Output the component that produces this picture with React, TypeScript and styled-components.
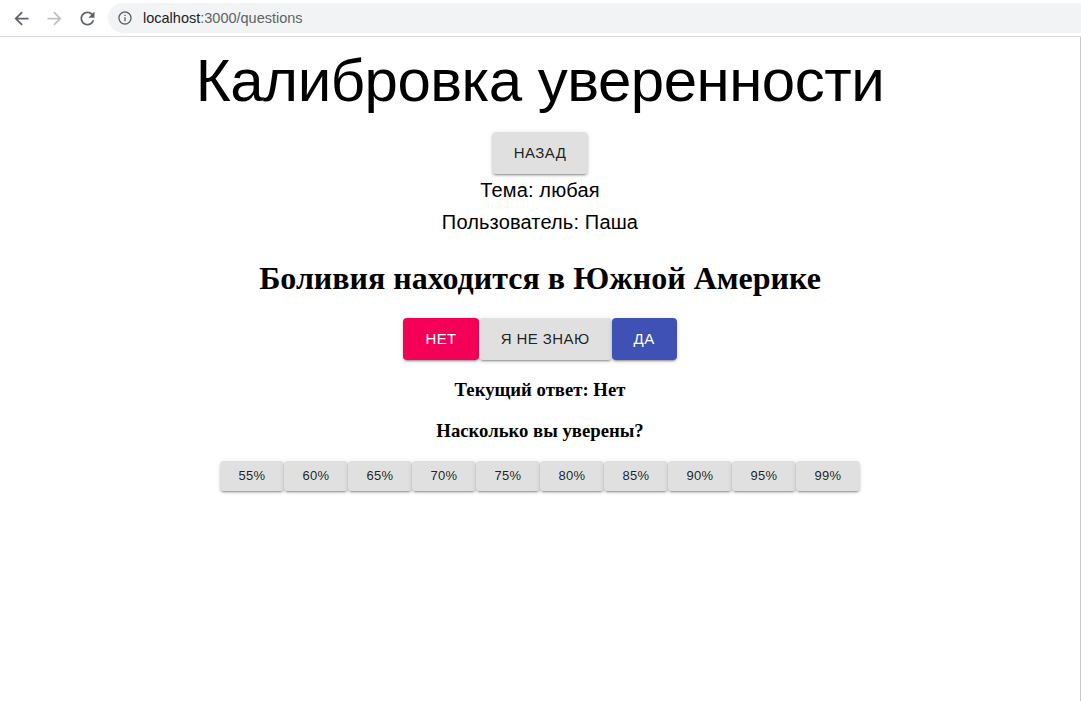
import React from "react";
import styled, { createGlobalStyle, css } from "styled-components";

const GlobalStyle = createGlobalStyle`
  html, body {
    margin: 0;
    padding: 0;
    background: #ffffff;
  }
  body {
    font-family: "Liberation Serif", "Times New Roman", serif;
    color: #000;
  }
`;

/* ---------- browser chrome ---------- */

const Chrome = styled.header`
  display: flex;
  align-items: center;
  height: 36px;
  padding-left: 7px;
  background: #ffffff;
  border-bottom: 1px solid #dadce0;
  box-sizing: content-box;
`;

const NavIcons = styled.div`
  display: flex;
  align-items: center;
  gap: 5px;
`;

const NavButton = styled.span<{ $disabled?: boolean }>`
  display: flex;
  align-items: center;
  justify-content: center;
  width: 28px;
  height: 28px;
  color: ${(p) => (p.$disabled ? "#bdc1c6" : "#5f6368")};
`;

const Omnibox = styled.div`
  flex: 1;
  display: flex;
  align-items: center;
  gap: 10px;
  height: 30px;
  margin-left: 7px;
  margin-top: -1px;
  padding-left: 9px;
  background: #f1f3f4;
  border-radius: 15px 0 0 15px;
  font-family: "Liberation Sans", Arial, sans-serif;
  font-size: 14.5px;
`;

const Host = styled.span`
  color: #202124;
`;

const PathPart = styled.span`
  color: #5f6368;
`;

const UrlText = styled.div`
  display: flex;
  white-space: nowrap;
`;

/* ---------- page ---------- */

const Page = styled.main`
  box-sizing: border-box;
  min-height: calc(100vh - 37px);
  padding: 8px;
  border-right: 1px solid #c8c8c8;
  text-align: center;
`;

const Title = styled.h2`
  margin: 0;
  font-family: "Liberation Sans", Arial, sans-serif;
  font-size: 60px;
  font-weight: 400;
  line-height: 1.2;
  letter-spacing: -0.00833em;
  color: #000;
`;

const Info = styled.h6`
  margin: 0;
  font-family: "Liberation Sans", Arial, sans-serif;
  font-size: 20px;
  font-weight: 400;
  line-height: 1.6;
  letter-spacing: 0.0075em;
  color: #000;
`;

const Question = styled.h1`
  margin: 0.67em 0;
  font-family: "Liberation Serif", "Times New Roman", serif;
  font-size: 32px;
  font-weight: 700;
`;

const SubHeading = styled.h3`
  margin: 1em 0;
  font-family: "Liberation Serif", "Times New Roman", serif;
  font-size: 18.72px;
  font-weight: 700;
`;

const ButtonRow = styled.div<{ $top?: number }>`
  display: flex;
  justify-content: center;
  margin-top: ${(p) => p.$top ?? 0}px;
`;

type Tone = "default" | "primary" | "secondary";

const tones: Record<Tone, ReturnType<typeof css>> = {
  default: css`
    background: #e0e0e0;
    color: rgba(0, 0, 0, 0.87);
  `,
  primary: css`
    background: #3f51b5;
    color: #ffffff;
  `,
  secondary: css`
    background: #f50057;
    color: #ffffff;
  `,
};

const Button = styled.button<{ $tone?: Tone; $small?: boolean }>`
  display: inline-flex;
  align-items: center;
  justify-content: center;
  box-sizing: border-box;
  min-width: 64px;
  margin: 0;
  border: 0;
  border-radius: 4px;
  font-family: "Liberation Sans", Arial, sans-serif;
  font-weight: 400;
  line-height: 1.75;
  letter-spacing: 0.02857em;
  text-transform: uppercase;
  cursor: pointer;
  padding: ${(p) => (p.$small ? "4px 10px" : "8px 22px")};
  font-size: ${(p) => (p.$small ? "13px" : "15px")};
  box-shadow: 0px 3px 1px -2px rgba(0, 0, 0, 0.2),
    0px 2px 2px 0px rgba(0, 0, 0, 0.14), 0px 1px 5px 0px rgba(0, 0, 0, 0.12);
  ${(p) => tones[p.$tone ?? "default"]}
`;

const BackIcon = () => (
  <svg width="21" height="21" viewBox="0 0 24 24" fill="currentColor">
    <path d="M20 11H7.83l5.59-5.59L12 4l-8 8 8 8 1.41-1.41L7.83 13H20v-2z" />
  </svg>
);

const ForwardIcon = () => (
  <svg width="21" height="21" viewBox="0 0 24 24" fill="currentColor">
    <path d="M12 4l-1.41 1.41L16.17 11H4v2h12.17l-5.58 5.59L12 20l8-8z" />
  </svg>
);

const ReloadIcon = () => (
  <svg width="21" height="21" viewBox="0 0 24 24" fill="currentColor">
    <path d="M17.65 6.35C16.2 4.9 14.21 4 12 4c-4.42 0-7.99 3.58-7.99 8s3.57 8 7.99 8c3.73 0 6.84-2.55 7.73-6h-2.08c-.82 2.33-3.04 4-5.65 4-3.31 0-6-2.69-6-6s2.69-6 6-6c1.66 0 3.14.69 4.22 1.78L13 11h7V4l-2.35 2.35z" />
  </svg>
);

const InfoIcon = () => (
  <svg width="16" height="16" viewBox="0 0 24 24" fill="#5f6368">
    <path d="M11 7h2v2h-2zm0 4h2v6h-2zm1-9C6.48 2 2 6.48 2 12s4.48 10 10 10 10-4.48 10-10S17.52 2 12 2zm0 18c-4.41 0-8-3.59-8-8s3.59-8 8-8 8 3.59 8 8-3.59 8-8 8z" />
  </svg>
);

const percents = ["55%", "60%", "65%", "70%", "75%", "80%", "85%", "90%", "95%", "99%"];

export default function App() {
  return (
    <>
      <GlobalStyle />
      <Chrome>
        <NavIcons>
          <NavButton>
            <BackIcon />
          </NavButton>
          <NavButton $disabled>
            <ForwardIcon />
          </NavButton>
          <NavButton>
            <ReloadIcon />
          </NavButton>
        </NavIcons>
        <Omnibox>
          <InfoIcon />
          <UrlText>
            <Host>localhost</Host>
            <PathPart>:3000/questions</PathPart>
          </UrlText>
        </Omnibox>
      </Chrome>
      <Page>
        <Title>Калибровка уверенности</Title>
        <ButtonRow $top={15}>
          <Button>Назад</Button>
        </ButtonRow>
        <Info>Тема: любая</Info>
        <Info>Пользователь: Паша</Info>
        <Question>Боливия находится в Южной Америке</Question>
        <ButtonRow>
          <Button $tone="secondary">Нет</Button>
          <Button>Я не знаю</Button>
          <Button $tone="primary">Да</Button>
        </ButtonRow>
        <SubHeading>Текущий ответ: Нет</SubHeading>
        <SubHeading>Насколько вы уверены?</SubHeading>
        <ButtonRow $top={2}>
          {percents.map((p) => (
            <Button key={p} $small>
              {p}
            </Button>
          ))}
        </ButtonRow>
      </Page>
    </>
  );
}
